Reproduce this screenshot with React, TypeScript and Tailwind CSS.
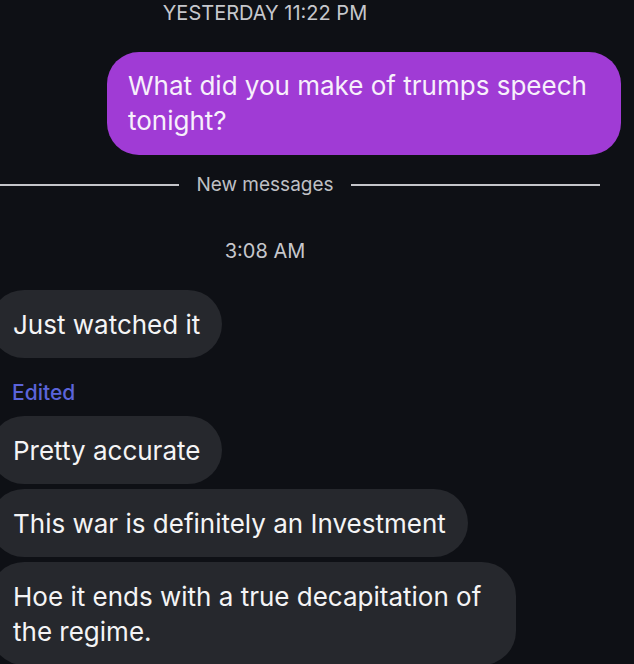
import React from 'react';

const Incoming: React.FC<{ children: React.ReactNode; className?: string }> = ({ children, className = '' }) => (
    <div className={`-ml-[10px] self-start rounded-[34px] bg-[#26282d] pl-[23px] pr-[22px] pt-[17px] pb-[16px] text-[26px] leading-[35px] text-[#f4f4f5] ${className}`}>
        {children}
    </div>
);

export default function App() {
    return (
        <div className="w-[634px] h-[664px] overflow-hidden bg-[#0e1015] font-['Inter','Liberation_Sans',sans-serif]">
            <div className="flex flex-col">
                <div className="w-[530px] pt-[2px] text-center text-[20px] leading-[22px] text-[#c6c7cc]">YESTERDAY 11:22 PM</div>

                <div className="ml-[107px] mt-[28px] w-[514px] rounded-[32px] bg-[#a03bd5] pl-[21px] pr-[12px] pt-[16px] pb-[17px] text-[26px] leading-[35px] text-[#f7f0fb]">
                    What did you make of trumps speech tonight?
                </div>

                <div className="mt-[19px] flex items-center">
                    <div className="h-[2px] w-[179px] shrink-0 bg-[#c4c5c9]" />
                    <div className="w-[172px] shrink-0 whitespace-nowrap text-center text-[19px] leading-[22px] text-[#bfc0c5]">New messages</div>
                    <div className="h-[2px] w-[249px] shrink-0 bg-[#c4c5c9]" />
                </div>

                <div className="mt-[44px] w-[530px] text-center text-[20px] leading-[22px] text-[#c6c7cc]">3:08 AM</div>

                <div className="mt-[28px] flex flex-col">
                    <Incoming>Just watched it</Incoming>
                    <div className="mt-[24px] pl-[12px] text-[21px] font-medium leading-[22px] text-[#5b64da]">Edited</div>
                    <Incoming className="mt-[12px]">Pretty accurate</Incoming>
                    <Incoming className="mt-[5px]">This war is definitely an Investment</Incoming>
                    <Incoming className="mt-[5px] w-[526px] rounded-[30px]">Hoe it ends with a true decapitation of the regime.</Incoming>
                </div>
            </div>
        </div>
    );
}
